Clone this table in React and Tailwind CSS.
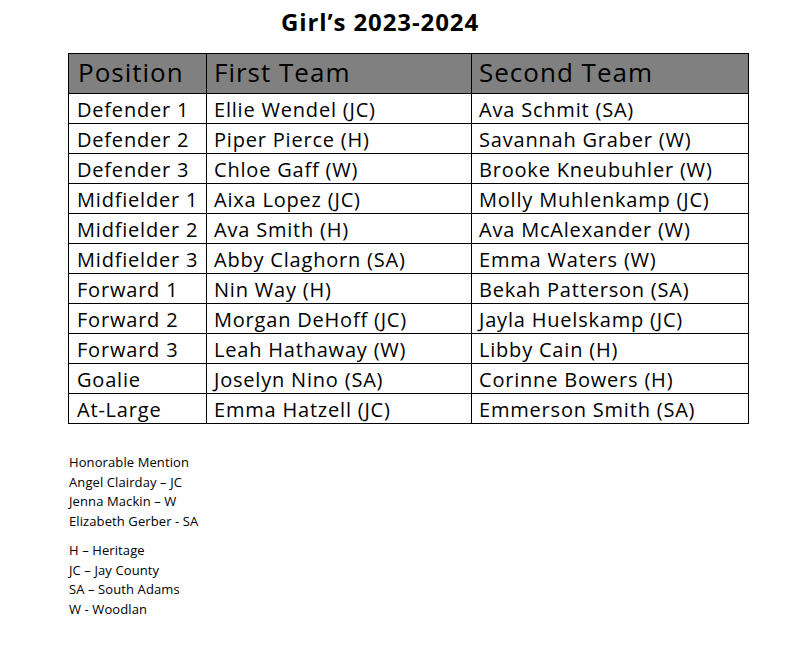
import React from "react";

const rows = [
  ["Defender 1", "Ellie Wendel (JC)", "Ava Schmit (SA)"],
  ["Defender 2", "Piper Pierce (H)", "Savannah Graber (W)"],
  ["Defender 3", "Chloe Gaff (W)", "Brooke Kneubuhler (W)"],
  ["Midfielder 1", "Aixa Lopez (JC)", "Molly Muhlenkamp (JC)"],
  ["Midfielder 2", "Ava Smith (H)", "Ava McAlexander (W)"],
  ["Midfielder 3", "Abby Claghorn (SA)", "Emma Waters (W)"],
  ["Forward 1", "Nin Way (H)", "Bekah Patterson (SA)"],
  ["Forward 2", "Morgan DeHoff (JC)", "Jayla Huelskamp (JC)"],
  ["Forward 3", "Leah Hathaway (W)", "Libby Cain (H)"],
  ["Goalie", "Joselyn Nino (SA)", "Corinne Bowers (H)"],
  ["At-Large", "Emma Hatzell (JC)", "Emmerson Smith (SA)"],
];

export default function App() {
  return (
    <div
      className="w-[787px] h-[646px] bg-white text-black"
      style={{ fontFamily: "'Open Sans', Lato, sans-serif" }}
    >
      <div className="pt-[6px] pl-[68px]">
        <div className="w-[624px] text-center text-[24px] tracking-[0.9px] font-bold leading-[32px] h-[47px]">
          Girl’s 2023-2024
        </div>
        <table className="border-collapse w-[680px] table-fixed">
          <colgroup>
            <col className="w-[138px]" />
            <col className="w-[265px]" />
            <col className="w-[277px]" />
          </colgroup>
          <thead>
            <tr className="bg-[#808080] h-[40px]">
              <th className="border border-black text-left font-normal text-[26px] tracking-[1px] pl-[9px] pb-[3px] leading-[35px]">Position</th>
              <th className="border border-black text-left font-normal text-[26px] tracking-[1px] pl-[7px] pb-[3px] leading-[35px]">First Team</th>
              <th className="border border-black text-left font-normal text-[26px] tracking-[1px] pl-[7px] pb-[3px] leading-[35px]">Second Team</th>
            </tr>
          </thead>
          <tbody>
            {rows.map((r) => (
              <tr key={r[0]} className="h-[30px]">
                <td className="border border-black text-[20px] tracking-[0.8px] leading-[27px] pt-[1px] pl-[8px]">{r[0]}</td>
                <td className="border border-black text-[20px] tracking-[0.8px] leading-[27px] pt-[1px] pl-[7px]">{r[1]}</td>
                <td className="border border-black text-[20px] tracking-[0.8px] leading-[27px] pt-[1px] pl-[7px]">{r[2]}</td>
              </tr>
            ))}
          </tbody>
        </table>
        <div className="mt-[29px] text-[13px] tracking-[0.1px] leading-[19.5px] pl-[1px]">
          <div>Honorable Mention</div>
          <div>Angel Clairday – JC</div>
          <div>Jenna Mackin – W</div>
          <div>Elizabeth Gerber - SA</div>
          <div className="mt-[10px]">H – Heritage</div>
          <div>JC – Jay County</div>
          <div>SA – South Adams</div>
          <div>W - Woodlan</div>
        </div>
      </div>
    </div>
  );
}
